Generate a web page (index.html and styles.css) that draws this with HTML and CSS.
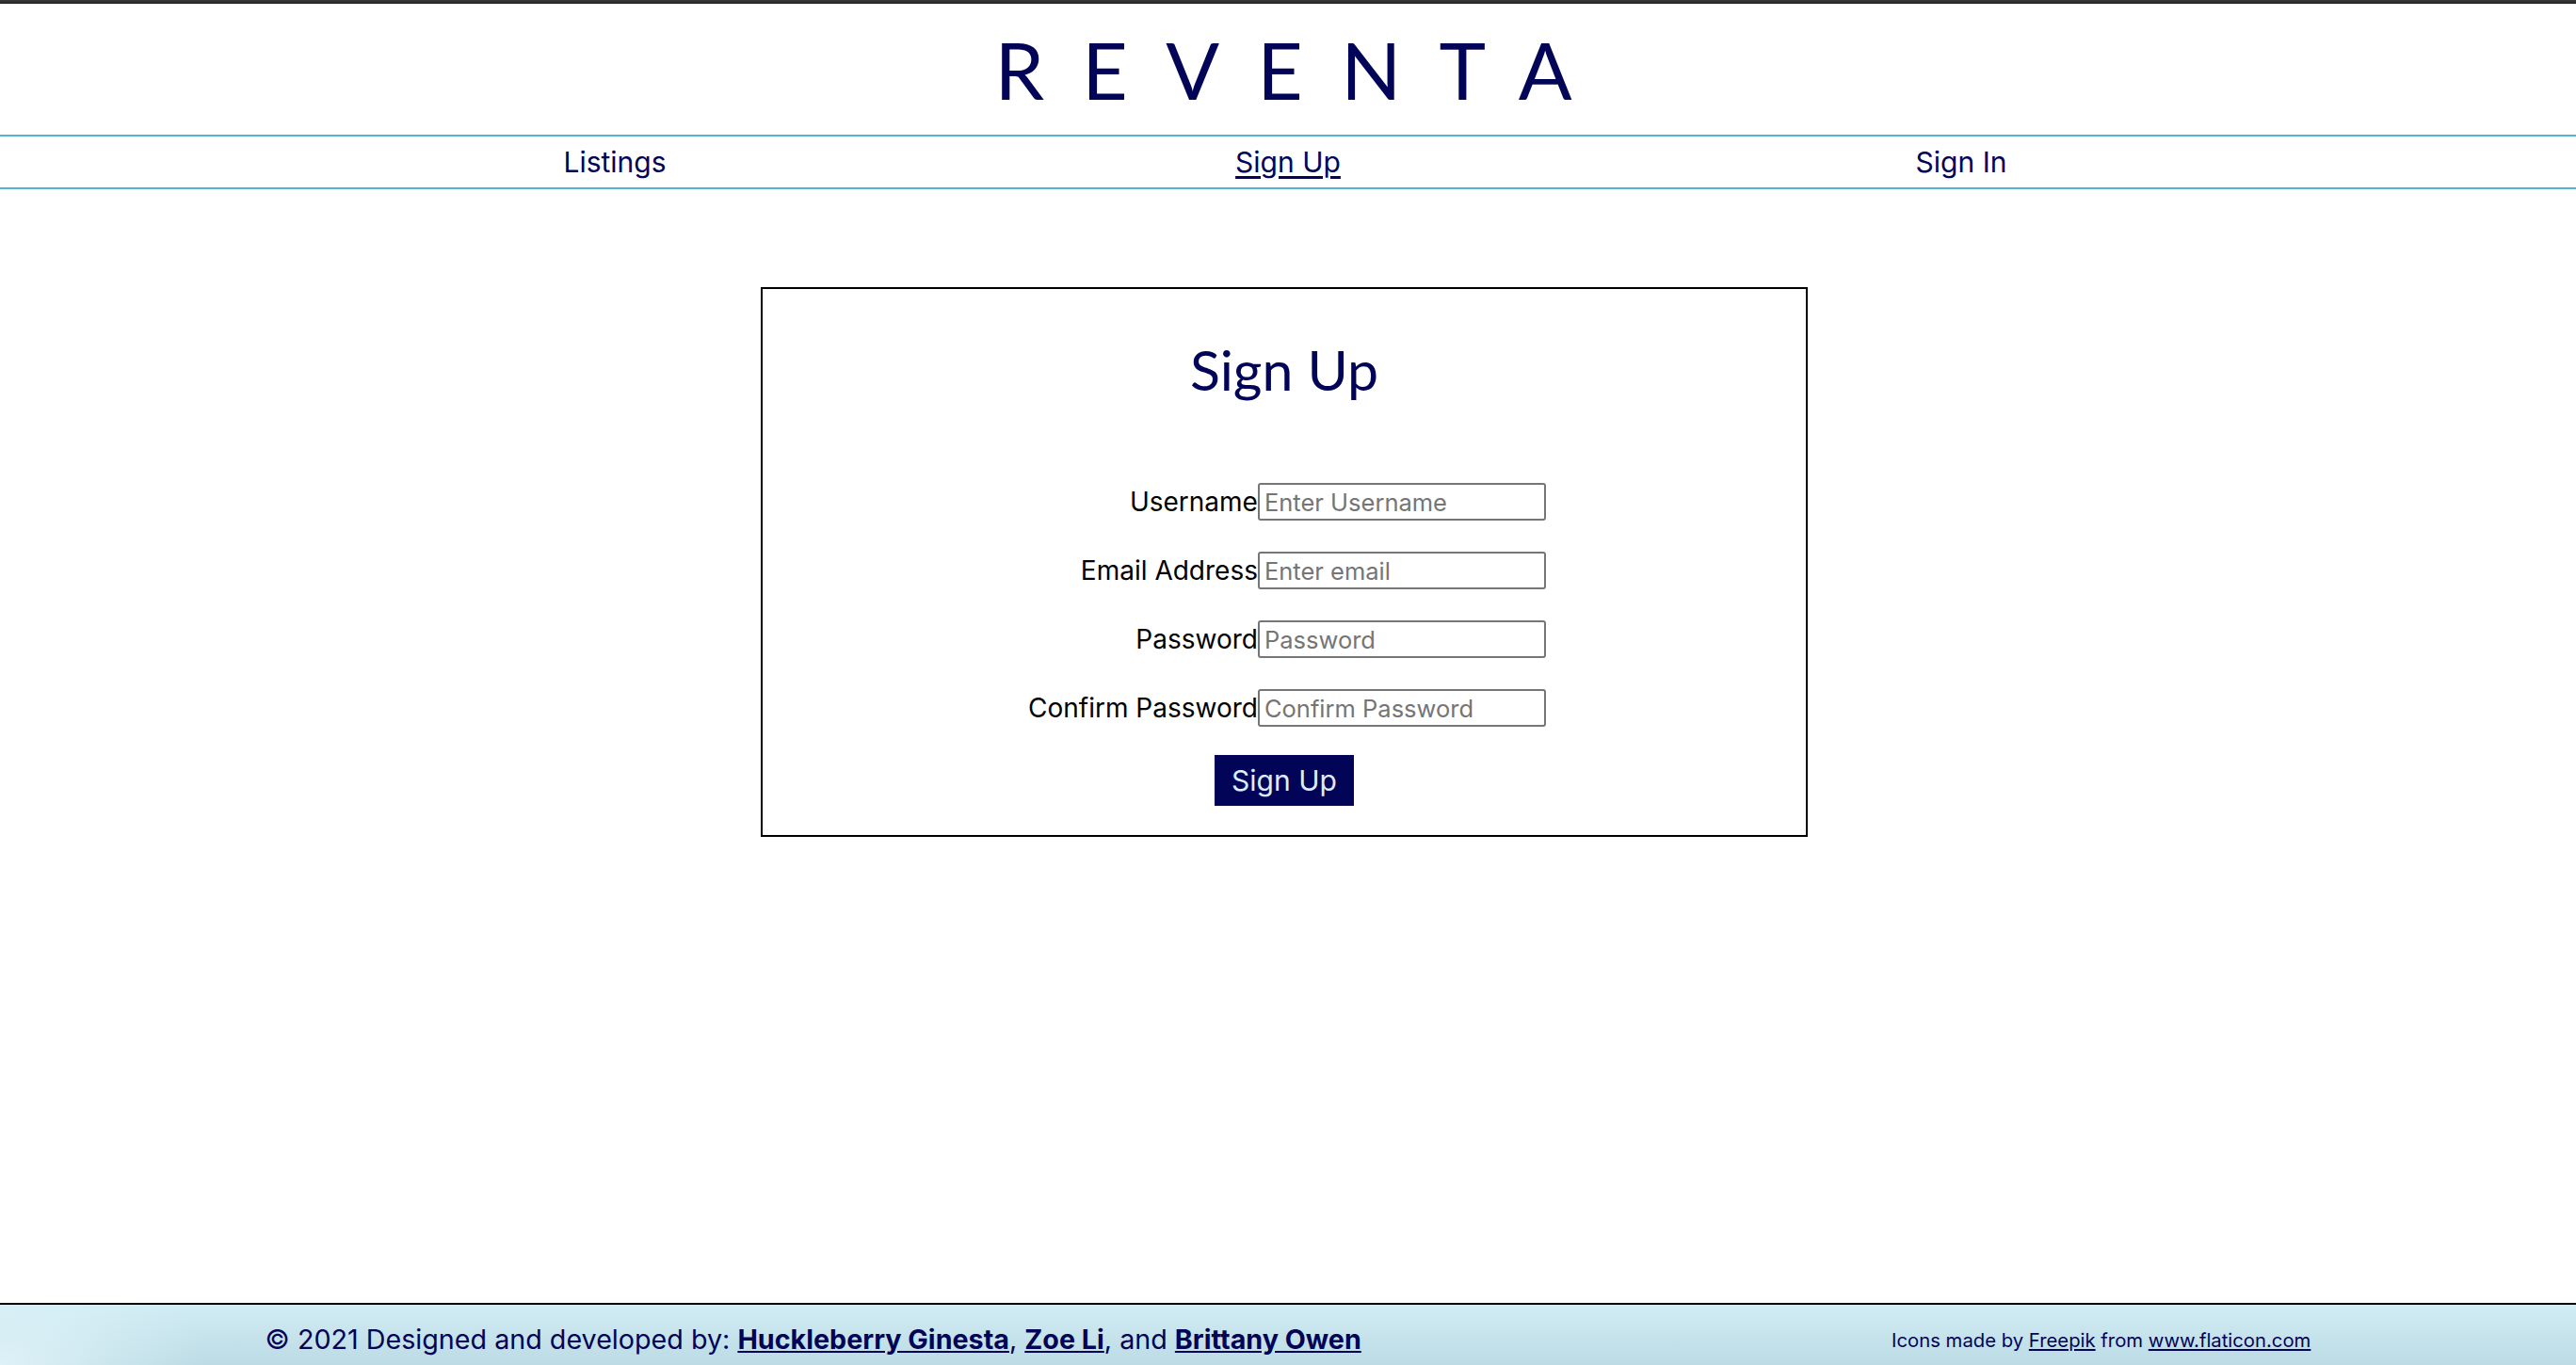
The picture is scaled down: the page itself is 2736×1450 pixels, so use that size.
FILE: index.html
```html
<!DOCTYPE html>
<html lang="en">
<head>
<meta charset="utf-8">
<title>Reventa - Sign Up</title>
<link rel="stylesheet" href="styles.css">
</head>
<body>
<div class="topbar"></div>
<header class="brand-wrap">
  <div class="brand">REVENTA</div>
</header>
<nav class="nav">
  <div class="nav-inner">
    <a class="nav-link" href="#">Listings</a>
    <a class="nav-link active" href="#">Sign Up</a>
    <a class="nav-link" href="#">Sign In</a>
  </div>
</nav>
<main class="main">
  <section class="card">
    <h1 class="card-title">Sign Up</h1>
    <form class="form">
      <label class="form-label" for="u">Username</label>
      <input class="form-input" id="u" type="text" placeholder="Enter Username">
      <label class="form-label" for="e">Email Address</label>
      <input class="form-input" id="e" type="email" placeholder="Enter email">
      <label class="form-label" for="p">Password</label>
      <input class="form-input" id="p" type="password" placeholder="Password">
      <label class="form-label" for="c">Confirm Password</label>
      <input class="form-input" id="c" type="password" placeholder="Confirm Password">
      <div class="form-actions"><button class="btn" type="button">Sign Up</button></div>
    </form>
  </section>
</main>
<footer class="footer">
  <div class="footer-credits">© 2021 Designed and developed by: <a href="#">Huckleberry Ginesta</a>, <a href="#">Zoe Li</a>, and <a href="#">Brittany Owen</a></div>
  <div class="footer-icons">Icons made by <a href="#">Freepik</a> from <a href="#">www.flaticon.com</a></div>
</footer>
</body>
</html>
```

FILE: styles.css
```css
html, body {
  margin: 0;
  padding: 0;
}
body {
  font-family: Inter, "Noto Sans", "Liberation Sans", sans-serif;
  color: #000;
  background: #fff;
  min-height: 100vh;
  display: flex;
  flex-direction: column;
}
.topbar {
  height: 4px;
  background: linear-gradient(#3a3a3a, #222);
}
.brand-wrap {
  height: 139px;
  display: flex;
  align-items: center;
  justify-content: center;
}
.brand {
  font-family: Lato, Inter, sans-serif;
  font-size: 84px;
  font-weight: 400;
  letter-spacing: 0.48em;
  padding-left: 0.36em;
  color: #020457;
  line-height: 1;
}
.nav {
  border-top: 2px solid #54b2d3;
  border-bottom: 2px solid #54b2d3;
}
.nav-inner {
  width: 2145px;
  margin: 0 auto;
  height: 54px;
  display: grid;
  grid-template-columns: 1fr 1fr 1fr;
  align-items: center;
}
.nav-link {
  text-align: center;
  color: #020457;
  font-size: 30px;
  text-decoration: none;
}
.nav-link.active {
  text-decoration: underline;
  text-underline-offset: 4px;
}
.main {
  flex: 1;
  padding-top: 104px;
}
.card {
  width: 1108px;
  margin: 0 auto;
  border: 2px solid #000;
  padding: 52px 0 31px;
  position: relative;
  left: -4px;
}
.card-title {
  margin: 0 0 87px;
  text-align: center;
  font-family: Lato, Inter, sans-serif;
  font-size: 59px;
  font-weight: 400;
  line-height: 67px;
  color: #020457;
}
.form {
  display: grid;
  grid-template-columns: auto 306px;
  justify-content: center;
  row-gap: 33px;
  align-items: center;
  padding-left: 6px;
}
.form-label {
  text-align: right;
  font-size: 28px;
  line-height: 40px;
  color: #000;
}
.form-input {
  box-sizing: border-box;
  width: 306px;
  height: 40px;
  border: 2px solid #767676;
  border-radius: 3px;
  padding: 0 5px;
  font-family: Inter, "Noto Sans", sans-serif;
  font-size: 25.5px;
  color: #000;
}
.form-input::placeholder {
  color: #757575;
}
.form-actions {
  grid-column: 1 / -1;
  display: flex;
  justify-content: center;
  margin-top: -3px;
  margin-left: -6px;
}
.btn {
  width: 148px;
  height: 54px;
  border: none;
  background: #020457;
  color: #dcecff;
  font-family: Inter, "Noto Sans", sans-serif;
  font-size: 30px;
  padding: 0;
}
.footer {
  border-top: 2px solid #000;
  height: 64px;
  background:
    radial-gradient(ellipse 220px 120px at 0% 100%, rgba(225, 244, 250, 0.9), rgba(225, 244, 250, 0) 100%),
    linear-gradient(#d1ecf4, #bcdbe4);
  display: flex;
  justify-content: space-around;
  align-items: center;
  color: #020457;
}
.footer a {
  color: #020457;
}
.footer-credits {
  font-size: 28.7px;
  padding-top: 8px;
}
.footer-credits a {
  font-weight: 700;
}
.footer-icons {
  font-size: 20.3px;
  padding-top: 10px;
}
```
